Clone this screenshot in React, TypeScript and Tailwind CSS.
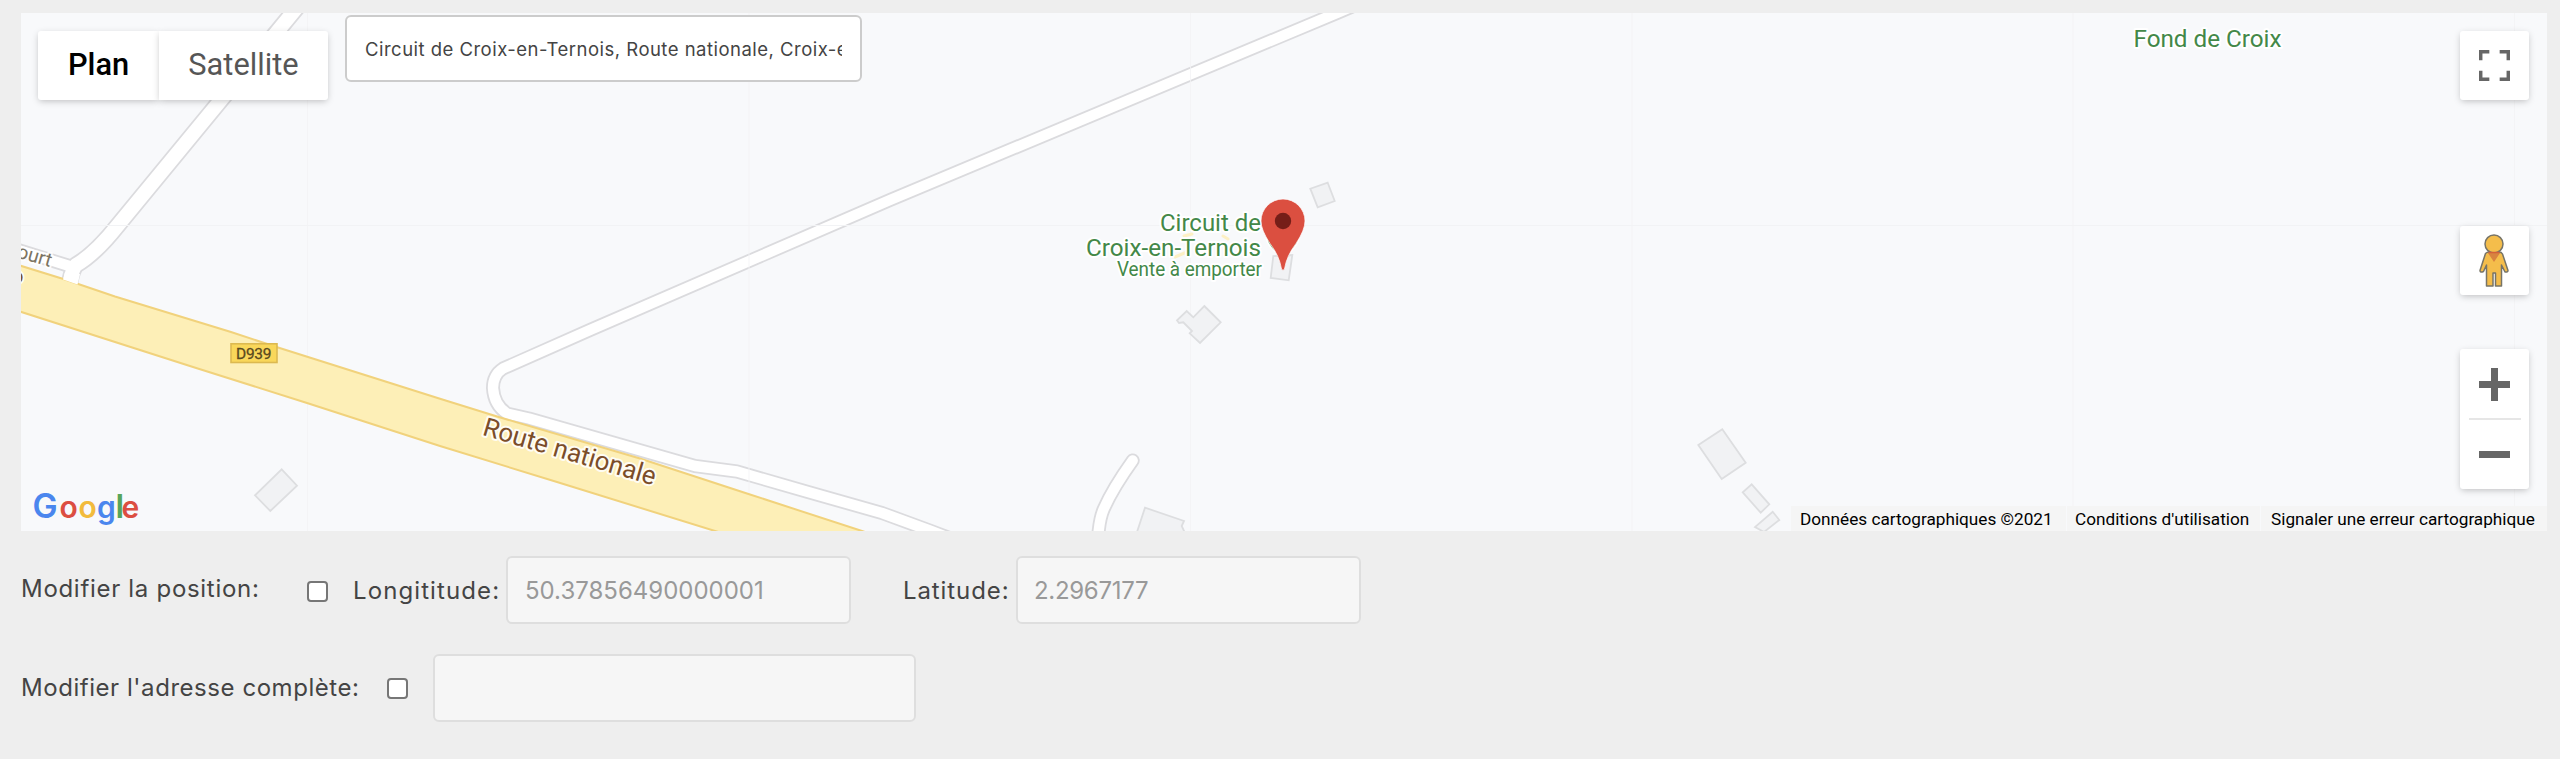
import { useState } from "react";
import clsx from "clsx";

const gridLines = [307.5, 749, 1190.5, 1632, 2073, 2514.5];

const buildings = [
  "281.7,469.3 297,485.7 270.3,511 255,495.3",
  "1327.7,182.7 1334.7,201 1317.7,207.3 1310.3,188.7",
  "1292.3,255 1288.7,280.3 1270.7,278 1273.3,256",
  "1204.3,306 1220.7,322.3 1200,343 1189.7,333.3 1192,331 1183.3,322.3 1179,323 1177,320.3 1186.7,311 1193.3,317.3",
  "1137,532 1145,507.7 1184,521 1181.7,526 1184.5,532",
  "1722.3,429.3 1745.7,462.7 1721.7,479 1698.3,445",
  "1751.7,484.3 1769.3,504.3 1760.7,512.7 1742.7,492.3",
  "1772.7,511.7 1779.3,520 1764,532 1755,527",
];

const roads = [
  { d: "M15 249L71 266.5", width: 13 },
  { d: "M297 7.500L117.300 226Q95 254 76 265Q72 270 70 281", width: 16.4 },
  {
    d: "M1351 7L1337 13L890 200L590 330L503 368.500Q493 375 493 388Q494 405 507 413.500L529 418.500L695 466L737 471.500L808 492L882 513L931 531L952 539",
    width: 13,
  },
  { d: "M1132.700 460.500Q1113 488 1103.700 509Q1099 520 1098 540", width: 13 },
];

const logo = [
  { letter: "G", x: 32.5, size: 33.5, color: "#4a86ee" },
  { letter: "o", x: 59.5, size: 30, color: "#dc4e41" },
  { letter: "o", x: 78.5, size: 30, color: "#f2bb3c" },
  { letter: "g", x: 97, size: 30, color: "#4a86ee" },
  { letter: "l", x: 115.5, size: 33, color: "#57a55a" },
  { letter: "e", x: 121.5, size: 30, color: "#dc4e41" },
];

const MapCanvas = () => (
  <svg
    className="col-start-1 row-start-1 font-[Roboto,sans-serif]"
    width="2526"
    height="518"
    viewBox="21 13 2526 518"
  >
    <rect x="21" y="13" width="2526" height="518" fill="#f8f9fb" />

    {/* Roads */}
    <g fill="none" strokeLinecap="round" strokeLinejoin="round">
      {roads.map((road) => (
        <path key={road.d} d={road.d} stroke="#dbdbde" strokeWidth={road.width + 1} />
      ))}
      {roads.map((road) => (
        <path key={road.d} d={road.d} stroke="#fff" strokeWidth={road.width - 2.6} />
      ))}
    </g>

    {/* Tile seams */}
    <g stroke="#f2f3f5">
      {gridLines.map((x) => (
        <path key={x} d={`M${x} 13V531`} strokeOpacity=".8" />
      ))}
      <path d="M21 225.500H2547" />
    </g>

    <path
      d="M15 264L65 279.500L115 296.500L231 332L278 347.500L440 398.800L502 418L640 458.500L750 494.500L862 531L880 537L735 537L715 531L557 482L440 446L307 403L193 367L15 310Z"
      fill="#fdefb7"
      stroke="#f1d27c"
      strokeWidth="2"
    />
    <path d="M65 272L63 279.500L77.500 284.500L80 274Z" fill="#fff" />

    {buildings.map((points) => (
      <polygon key={points} points={points} fill="#f1f2f4" stroke="#dddee0" strokeWidth="1.8" />
    ))}

    {/* Track hints behind the place name */}
    <g stroke="#fdf0c4" strokeWidth="3" strokeLinecap="round">
      <path d="M1184 236L1192 234M1223 236L1228 239M1175 257L1187 252" />
    </g>

    {/* Road names */}
    <g stroke="#fff" strokeOpacity=".85" strokeWidth="4" strokeLinejoin="round" paintOrder="stroke">
      <text
        transform="translate(481.500 434.800) rotate(16.400)"
        fontSize="26"
        textLength="179"
        lengthAdjust="spacingAndGlyphs"
        fill="#7b4d29"
      >
        Route nationale
      </text>
      <text transform="translate(50 267) rotate(16)" textAnchor="end" fontSize="19.500" fill="#7c7462">
        court
      </text>
      <text x="23.500" y="283" textAnchor="end" fontSize="20" fill="#7b4d29">
        o
      </text>
    </g>
    <rect x="231" y="343.800" width="46" height="18.700" fill="#f9d75a" stroke="#dcb950" strokeWidth="1.600" />
    <text x="236" y="358.500" fontSize="15.500" textLength="35.500" fill="#594a20" stroke="#594a20" strokeWidth=".3">
      D939
    </text>

    {/* Places */}
    <g fill="#438848" stroke="#fff" strokeWidth="4" strokeLinejoin="round" paintOrder="stroke">
      <text x="1160" y="231.300" fontSize="24.500" textLength="101" lengthAdjust="spacingAndGlyphs">
        Circuit de
      </text>
      <text x="1086" y="255.500" fontSize="24.500" textLength="175" lengthAdjust="spacingAndGlyphs">
        Croix-en-Ternois
      </text>
      <text x="1117" y="275.500" fontSize="19.500" textLength="145" lengthAdjust="spacingAndGlyphs">
        Vente à emporter
      </text>
      <text x="2133.500" y="46.500" fontSize="24.500" textLength="148" lengthAdjust="spacingAndGlyphs">
        Fond de Croix
      </text>
    </g>

    {/* Marker */}
    <path
      d="M1266.500 239Q1269 249 1283 257Q1296 249 1299 239Z"
      fill="#4fa05b"
      stroke="#fff"
      strokeWidth="1.500"
    />
    <path
      d="M1281.500 269Q1279.500 256 1270 243.500Q1261 230 1261 221A22 22 0 0 1 1305 221Q1305 230 1296 243.500Q1286.500 256 1284.500 269Q1283 271.500 1281.500 269Z"
      fill="#db4f40"
      stroke="#fff"
      strokeWidth=".7"
    />
    <circle cx="1283" cy="221" r="8.200" fill="#751e18" />

    <g className="font-[Inter,sans-serif]" fontWeight="600">
      {logo.map((item) => (
        <text key={item.x} x={item.x} y="517.500" fontSize={item.size} fill={item.color}>
          {item.letter}
        </text>
      ))}
    </g>
  </svg>
);

const MapControls = () => {
  const [mapType, setMapType] = useState("Plan");

  return (
    <div className="z-10 col-start-1 row-start-1 flex items-start justify-between pr-[18px] pl-[17px]">
      <div className="flex items-start">
        <div className="mt-[18px] flex h-[69px] rounded-[3px] font-[Roboto,sans-serif] text-[30.8px]">
          {["Plan", "Satellite"].map((type) => (
            <button
              key={type}
              onClick={() => setMapType(type)}
              className={clsx(
                "bg-white pb-px shadow-[0_2px_7px_-1px_rgba(0,0,0,0.25)] first:w-[121px] first:rounded-l-[3px] last:w-[169px] last:rounded-r-[3px]",
                mapType === type ? "font-medium text-black" : "text-[#565656]"
              )}
            >
              {type}
            </button>
          ))}
        </div>
        <input
          className="mt-0.5 ml-[17px] h-[67px] w-[517px] rounded-md border-2 border-[#ccc] bg-white px-[18px] text-[18.5px] tracking-[0.48px] text-[#444]"
          defaultValue="Circuit de Croix-en-Ternois, Route nationale, Croix-en-Ternois, France"
        />
      </div>

      <div className="flex flex-col pt-[18px]">
        <button className="grid size-[69px] place-items-center rounded-[3px] bg-white shadow-[0_2px_7px_-1px_rgba(0,0,0,0.25)]">
          <svg width="31" height="31" viewBox="0 0 18 18" fill="#666">
            <path d="M0 0v6h2V2h4V0H0zm16 0h-4v2h4v4h2V0h-2zm0 16h-4v2h6v-6h-2v4zM2 12H0v6h6v-2H2v-4z" />
          </svg>
        </button>
        <button className="mt-[126px] grid size-[69px] place-items-center rounded-[3px] bg-white pr-0.5 shadow-[0_2px_7px_-1px_rgba(0,0,0,0.25)]">
          <svg width="30" height="54" viewBox="0 0 30 54" fill="#f4bd4b" stroke="#777467" strokeWidth="1.500">
            <path
              d="M6.500 19.500Q8 18 10 18H20Q22.500 18 23.500 20L29 36.500Q29 38.500 26 38L22.500 31V52H16.500V39H14V52H7.500V31L4.500 37.500Q1 39 1 36.500Z"
              strokeLinejoin="round"
            />
            <circle cx="15" cy="10" r="9" />
            <path d="M9 19H21L15 28Z" fill="#d8833f" stroke="none" />
            <path d="M9.500 18.500H20.500" stroke="#d3603a" />
          </svg>
        </button>
        <div className="mt-[54px] flex h-[140px] flex-col items-center rounded-[3px] bg-white shadow-[0_2px_7px_-1px_rgba(0,0,0,0.25)]">
          <button className="grid h-[69px] w-full place-items-center pt-px">
            <svg width="31" height="33" viewBox="0 0 31 33" fill="#666">
              <path d="M12 0h7v13h12v7H19v13h-7V20H0v-7h12z" />
            </svg>
          </button>
          <div className="h-0.5 w-[52px] bg-[#e6e6e6]" />
          <button className="grid h-[69px] w-full place-items-center">
            <div className="h-[7px] w-[31px] bg-[#666]" />
          </button>
        </div>
      </div>
    </div>
  );
};

const Attribution = () => (
  <div className="z-10 col-start-1 row-start-1 flex h-[25px] gap-px self-end justify-self-end font-[Roboto,sans-serif] text-[17.2px] leading-[26px] whitespace-nowrap text-black">
    <span className="w-[275px] bg-[#f5f5f5] pl-[9px]">Données cartographiques ©2021</span>
    <a className="w-[193px] bg-[#f5f5f5] pl-2">Conditions d'utilisation</a>
    <a className="w-[286px] bg-[#f5f5f5] pl-2.5">Signaler une erreur cartographique</a>
  </div>
);

const Checkbox = ({ className }: { className?: string }) => (
  <input
    type="checkbox"
    className={clsx(
      "h-[21px] w-[21px] shrink-0 appearance-none rounded-[4px] border-2 border-[#767676] bg-white",
      className
    )}
  />
);

const App = () => {
  return (
    <main className="h-[759px] w-[2560px] overflow-hidden bg-[#eee] pt-[13px] pl-[21px] font-[Inter,sans-serif] text-[#444]">
      <section className="grid h-[518px] w-[2526px] overflow-hidden">
        <MapCanvas />
        <MapControls />
        <Attribution />
      </section>

      <div className="mt-[25px] flex h-[68px] items-center text-2xl whitespace-nowrap">
        <label className="w-[286px] shrink-0 pb-0.5 tracking-[0.7px]">Modifier la position:</label>
        <Checkbox className="mt-0.5" />
        <label className="ml-[25px] w-[153px] shrink-0 pt-0.5 tracking-[1.1px]">Longititude:</label>
        <input
          disabled
          className="h-[68px] w-[345px] rounded-md border-2 border-[#dedede] bg-[#f6f6f6] px-[17px] text-[#999]"
          value="50.37856490000001"
        />
        <label className="ml-[52px] w-[113px] shrink-0 pt-0.5 tracking-[0.9px]">Latitude:</label>
        <input
          disabled
          className="h-[68px] w-[345px] rounded-md border-2 border-[#dedede] bg-[#f6f6f6] px-4 tracking-[-0.3px] text-[#999]"
          value="2.2967177"
        />
      </div>

      <div className="mt-[30px] flex h-[68px] items-center text-2xl whitespace-nowrap">
        <label className="w-[366px] shrink-0 tracking-[0.55px]">Modifier l'adresse complète:</label>
        <Checkbox />
        <input
          disabled
          className="ml-[25px] h-[68px] w-[483px] rounded-md border-2 border-[#dedede] bg-[#f6f6f6]"
        />
      </div>
    </main>
  );
};

export default App;
